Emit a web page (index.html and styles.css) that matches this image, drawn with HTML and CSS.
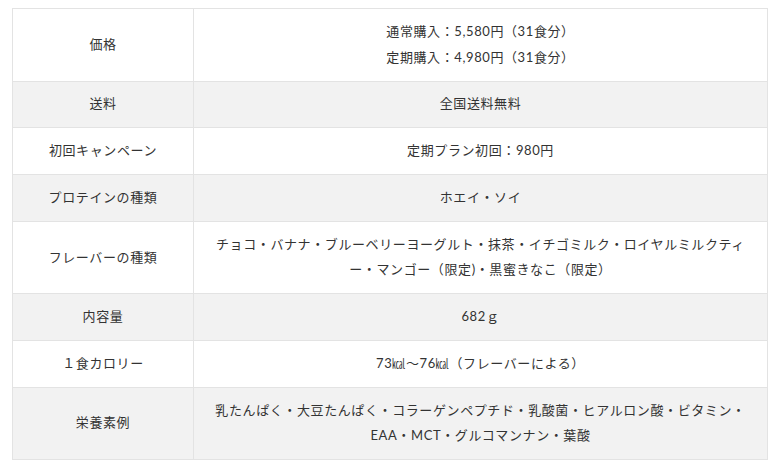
FILE: index.html
```html
<!DOCTYPE html>
<html lang="ja">
<head>
<meta charset="utf-8">
<link rel="stylesheet" href="styles.css">
</head>
<body>
<table class="spec">
  <tbody>
    <tr>
      <th>価格</th>
      <td>通常購入：5,580円（31食分）<br>定期購入：4,980円（31食分）</td>
    </tr>
    <tr class="alt">
      <th>送料</th>
      <td>全国送料無料</td>
    </tr>
    <tr>
      <th>初回キャンペーン</th>
      <td>定期プラン初回：980円</td>
    </tr>
    <tr class="alt">
      <th>プロテインの種類</th>
      <td>ホエイ・ソイ</td>
    </tr>
    <tr>
      <th>フレーバーの種類</th>
      <td>チョコ・バナナ・ブルーベリーヨーグルト・抹茶・イチゴミルク・ロイヤルミルクティー・マンゴー（限定)・黒蜜きなこ（限定）</td>
    </tr>
    <tr class="alt">
      <th>内容量</th>
      <td>682ｇ</td>
    </tr>
    <tr>
      <th>１食カロリー</th>
      <td>73㎉～76㎉（フレーバーによる）</td>
    </tr>
    <tr class="alt">
      <th>栄養素例</th>
      <td>乳たんぱく・大豆たんぱく・コラーゲンペプチド・乳酸菌・ヒアルロン酸・ビタミン・EAA・MCT・グルコマンナン・葉酸</td>
    </tr>
  </tbody>
</table>
</body>
</html>
```
FILE: styles.css
```css
html, body {
  margin: 0;
  padding: 0;
  background: #ffffff;
}
body {
  padding: 8px 11px 0 12px;
  font-family: Lato, "Noto Sans CJK JP", sans-serif;
  font-size: 13px;
  color: #333333;
}
.spec {
  width: 100%;
  border-collapse: collapse;
  table-layout: fixed;
}
.spec th,
.spec td {
  border: 1px solid #e3e3e3;
  text-align: center;
  vertical-align: middle;
  font-weight: normal;
  line-height: 25.9px;
  padding: 9.9px 15px;
  letter-spacing: 0.6px;
}
.spec th {
  width: 150px;
}
.spec tr.alt th,
.spec tr.alt td {
  background: #f2f2f2;
}
```
